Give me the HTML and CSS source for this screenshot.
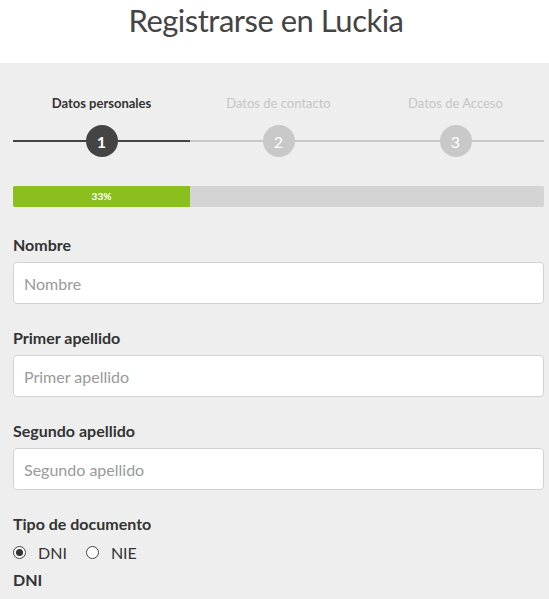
FILE: index.html
```html
<!DOCTYPE html>
<html lang="es">
<head>
<meta charset="utf-8">
<title>Registrarse en Luckia</title>
<link rel="stylesheet" href="styles.css">
</head>
<body>
<header class="header">
  <h1 class="title">Registrarse en Luckia</h1>
</header>
<main class="panel">
  <div class="steps">
    <div class="step active">
      <div class="step-label">Datos personales</div>
      <div class="step-track"><span class="step-num">1</span></div>
    </div>
    <div class="step">
      <div class="step-label">Datos de contacto</div>
      <div class="step-track"><span class="step-num">2</span></div>
    </div>
    <div class="step">
      <div class="step-label">Datos de Acceso</div>
      <div class="step-track"><span class="step-num">3</span></div>
    </div>
  </div>
  <div class="progress">
    <div class="progress-bar" style="width: 33.33%">33%</div>
  </div>
  <div class="field">
    <label class="label">Nombre</label>
    <input class="input" type="text" placeholder="Nombre">
  </div>
  <div class="field">
    <label class="label">Primer apellido</label>
    <input class="input" type="text" placeholder="Primer apellido">
  </div>
  <div class="field">
    <label class="label">Segundo apellido</label>
    <input class="input" type="text" placeholder="Segundo apellido">
  </div>
  <div class="field">
    <div class="label">Tipo de documento</div>
    <div class="radios">
      <label class="radio"><span class="radio-dot checked"></span>DNI</label>
      <label class="radio"><span class="radio-dot"></span>NIE</label>
    </div>
    <div class="label">DNI</div>
  </div>
</main>
</body>
</html>
```
FILE: styles.css
```css
* { box-sizing: border-box; }
html, body { margin: 0; padding: 0; }
body {
  font-family: Lato, "Open Sans", sans-serif;
  color: #333;
  background: #eeeeee;
}
.header {
  background: #fff;
  height: 63px;
  padding-right: 17px;
  display: flex;
  justify-content: center;
}
.title {
  margin: 0;
  font-weight: 400;
  font-size: 31px;
  line-height: 40px;
  letter-spacing: -0.5px;
  color: #444;
}
.panel {
  padding: 28px 5px 20px 13px;
}
.steps {
  display: flex;
}
.step {
  flex: 1;
  display: flex;
  flex-direction: column;
  align-items: center;
}
.step-label {
  font-size: 13px;
  line-height: 24px;
  color: #c6c6c6;
}
.active .step-label {
  color: #333;
  font-weight: 700;
}
.step-track {
  align-self: stretch;
  height: 32px;
  margin-top: 10px;
  display: flex;
  justify-content: center;
  align-items: center;
  background: linear-gradient(#c8c8c8, #c8c8c8) center / 100% 2px no-repeat;
}
.active .step-track {
  background: linear-gradient(#444, #444) center / 100% 2px no-repeat;
}
.step-num {
  width: 32px;
  height: 32px;
  border-radius: 50%;
  background: #c8c8c8;
  color: #fff;
  font-size: 16px;
  display: flex;
  align-items: center;
  justify-content: center;
}
.active .step-num {
  background: #444;
  font-weight: 700;
}
.progress {
  margin-top: 29px;
  height: 21px;
  background: #d4d4d4;
  border-radius: 2px;
  overflow: hidden;
}
.progress-bar {
  height: 100%;
  background: #8abf1e;
  color: #fff;
  font-size: 10px;
  font-weight: 700;
  line-height: 21px;
  text-align: center;
}
.field {
  margin-top: 27px;
}
.field + .field { margin-top: 23px; }
.label {
  display: block;
  font-size: 16px;
  font-weight: 700;
  line-height: 22px;
  color: #333;
}
.input {
  display: block;
  width: 100%;
  height: 42px;
  margin-top: 6px;
  border: 1px solid #d2d2d2;
  border-radius: 4px;
  background: #fff;
  padding: 0 10px;
  font-family: inherit;
  font-size: 16px;
  color: #333;
}
.input::placeholder { color: #9a9a9a; }
.radios {
  display: flex;
  gap: 19px;
  margin-top: 5px;
  height: 24px;
  align-items: center;
}
.radio {
  display: flex;
  align-items: center;
  gap: 12px;
  font-size: 16px;
  color: #333;
}
.radio-dot {
  width: 13px;
  height: 13px;
  border: 1px solid #444;
  border-radius: 50%;
  background: #fff;
  display: flex;
  align-items: center;
  justify-content: center;
}
.radio-dot.checked::after {
  content: "";
  width: 7px;
  height: 7px;
  border-radius: 50%;
  background: #333;
}
.field .radios + .label { margin-top: 5px; }
```
